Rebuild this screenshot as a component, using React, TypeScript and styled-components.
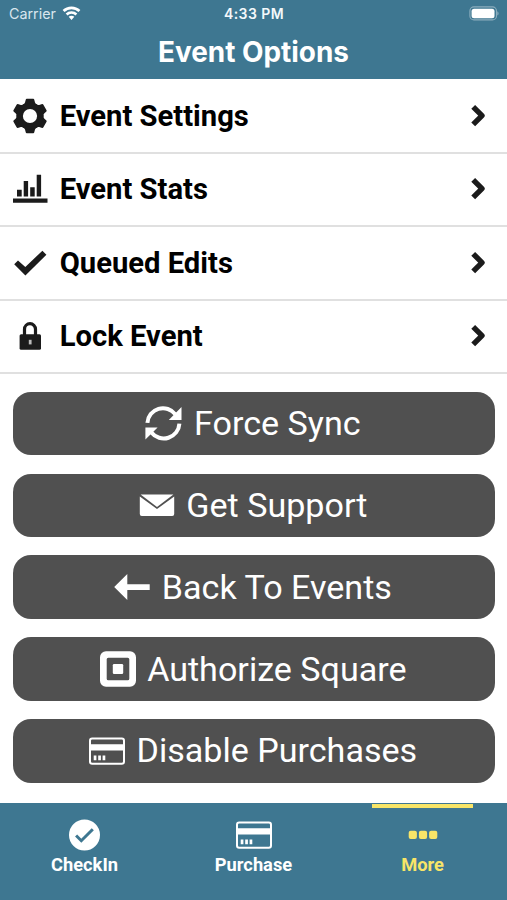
import React from "react";
import styled, { createGlobalStyle } from "styled-components";

const TEAL = "#3e7791";
const YELLOW = "#f8e568";
const INK = "#1b1b1b";

const GlobalStyle = createGlobalStyle`
  *, *::before, *::after { box-sizing: border-box; }
  body { margin: 0; background: #fff; }
`;

const Screen = styled.div`
  width: 507px;
  height: 900px;
  display: flex;
  flex-direction: column;
  overflow: hidden;
  background: #fff;
  font-family: Roboto, "Liberation Sans", sans-serif;
`;

const Header = styled.header`
  height: 79.4px;
  flex: none;
  background: ${TEAL};
  color: #fff;
  font-family: Inter, "Liberation Sans", sans-serif;
`;

const StatusBar = styled.div`
  height: 27px;
  display: grid;
  grid-template-columns: 1fr auto 1fr;
  align-items: center;
  padding: 0 8px 0 9px;
`;

const Carrier = styled.div`
  display: flex;
  align-items: center;
  gap: 6px;
  color: #d9e6ee;
  font-size: 14.3px;
  letter-spacing: 0;
`;

const Clock = styled.div`
  font-size: 14px;
  font-weight: 600;
  letter-spacing: 0.45px;
  color: #f3f8fb;
`;

const Battery = styled.div`
  display: flex;
  justify-content: flex-end;
`;

const Title = styled.h1`
  margin: 0;
  height: 51px;
  line-height: 51px;
  text-align: center;
  font-size: 27.9px;
  font-weight: 700;
  letter-spacing: 0;
`;

const Menu = styled.nav`
  flex: none;
  padding-top: 1px;
`;

const MenuRow = styled.a`
  height: 73.4px;
  display: flex;
  align-items: center;
  padding: 0 20px 0 12px;
  border-bottom: 2px solid #e0e0e0;
  color: #000;
  font-size: 29.2px;
  font-weight: 700;
`;

const MenuIcon = styled.span`
  width: 36px;
  height: 36px;
  margin-right: 11.7px;
  display: flex;
`;

const MenuLabel = styled.span`
  flex: 1;
`;

const Actions = styled.main`
  flex: 1;
  display: flex;
  flex-direction: column;
  gap: 18.35px;
  padding: 17.8px 12.5px 0 13px;
`;

const ActionButton = styled.button`
  height: 63.5px;
  flex: none;
  display: flex;
  align-items: center;
  justify-content: center;
  gap: 11.6px;
  padding: 0 1.4px 1px 0;
  border: 0;
  border-radius: 18px;
  background: #505050;
  color: #fff;
  font: 400 34.1px Roboto, "Liberation Sans", sans-serif;

  svg {
    margin-top: 1px;
  }
`;

const TabBar = styled.footer`
  height: 97.5px;
  flex: none;
  display: grid;
  grid-template-columns: repeat(3, 1fr);
  background: ${TEAL};
`;

const Tab = styled.a<{ $active?: boolean }>`
  display: flex;
  flex-direction: column;
  align-items: center;
  color: ${(p) => (p.$active ? YELLOW : "#fff")};
  font-size: 18.3px;
  font-weight: 700;
  line-height: 24px;
`;

const TabMarker = styled.span<{ $active?: boolean }>`
  width: 101px;
  height: 4px;
  margin-top: 1px;
  margin-bottom: 9.5px;
  background: ${(p) => (p.$active ? YELLOW : "transparent")};
`;

const TabIcon = styled.span`
  height: 36px;
  display: flex;
  align-items: center;
`;

const WifiIcon = () => (
  <svg width="19" height="15" viewBox="0 0 19 15" fill="#fff">
    <path d="M9.5.5C6 .5 2.900 1.900.6 4.100L2.500 6.100a10 10 0 0 1 14 0L18.400 4.100A12.700 12.700 0 0 0 9.500.5Z" />
    <path d="M9.500 5.200A8.200 8.200 0 0 0 3.700 7.500L5.500 9.400a5.700 5.700 0 0 1 8 0L15.300 7.500A8.200 8.200 0 0 0 9.500 5.200Z" />
    <path d="M9.500 9.700a4 4 0 0 0-2.800 1.100L9.500 14l2.800-3.200a4 4 0 0 0-2.800-1.100Z" />
  </svg>
);

const BatteryIcon = () => (
  <svg width="30" height="15" viewBox="0 0 30 15">
    <rect x=".9" y=".9" width="26.600" height="13" rx="4" fill="none" stroke="#8badbd" strokeWidth="1.100" />
    <rect x="2.600" y="2.700" width="22.900" height="9.500" rx="2.500" fill="#fff" />
    <path d="M28.300 5.200v4.400a2.500 2.500 0 0 0 0-4.400Z" fill="#8badbd" />
  </svg>
);

const GearIcon = () => (
  <svg width="36" height="36" viewBox="-18 -18 36 36" fill={INK}>
    {[0, 60, 120, 180, 240, 300].map((angle) => (
      <path
        key={angle}
        transform={`rotate(${angle})`}
        d="M-3.300-17.200H3.300Q4-17.200 4.200-16.500L5-13.500Q5.500-11.800 7-11.700L0 0L-7-11.700Q-5.500-11.800-5-13.500L-4.200-16.500Q-4-17.200-3.300-17.200Z"
      />
    ))}
    <circle r="10.200" fill="none" stroke={INK} strokeWidth="6.200" />
    <circle r="7.100" fill="#fff" />
  </svg>
);

const StatsIcon = () => (
  <svg width="36" height="36" viewBox="0 0 36 36" fill={INK}>
    <path d="M1 27.400h34.500v4.400H1zM5 18.700h4.700v6.700H5zM11.700 10h4.400v15.400h-4.400zM18.200 16.300h4.500v9.100h-4.500zM24.700 3.800h4.400v21.600h-4.400z" />
  </svg>
);

const CheckIcon = () => (
  <svg width="36" height="36" viewBox="0 0 36 36" fill={INK}>
    <path d="M2.200 19.300 6 15.500 13.300 22 30.400 5.700 34.400 9.700 13.400 30.600Z" />
  </svg>
);

const LockIcon = () => (
  <svg width="36" height="36" viewBox="0 0 36 36">
    <path d="M12.500 17V11.200a5.500 5.500 0 0 1 11 0V17" fill="none" stroke={INK} strokeWidth="3.200" />
    <rect x="7.600" y="16.200" width="21.400" height="15.600" rx="1.500" fill={INK} />
    <path d="M16.800 21.800h2.800v4.600h-2.800z" fill="#bbb" />
  </svg>
);

const ChevronIcon = () => (
  <svg width="18" height="26" viewBox="0 0 18 26">
    <path d="M4.200 3.800 13 12.600 4.200 21.400" fill="none" stroke={INK} strokeWidth="5.400" strokeLinejoin="round" />
  </svg>
);

const SyncIcon = () => (
  <svg width="37" height="37" viewBox="0 0 37 37" fill="#fff">
    <path d="M2.400 17.800A15.600 15.600 0 0 1 30.400 9.400M34.400 18.600A15.700 15.700 0 0 1 6.400 27.500" fill="none" stroke="#fff" strokeWidth="4" />
    <path d="M36.500 2v13.100H23.800ZM.4 34.500V22.400H12.600Z" />
  </svg>
);

const MailIcon = () => (
  <svg width="36" height="36" viewBox="0 0 36 36" fill="#fff">
    <path d="M1.600 7.600H34.400L18 19.900Z" />
    <path d="M.8 9.500 18 22 35.200 9.500V27a2 2 0 0 1-2 2H2.800a2 2 0 0 1-2-2Z" />
  </svg>
);

const ArrowIcon = () => (
  <svg width="36" height="36" viewBox="0 0 36 36" fill="#fff">
    <path d="M.2 18.100 13.300 5V15.200H35.700V21.100H13.300V31Z" />
  </svg>
);

const SquareIcon = () => (
  <svg width="36" height="36" viewBox="0 0 36 36" fill="#fff">
    <path
      fillRule="evenodd"
      d="M6 .2H30A6 6 0 0 1 36 6.200V29.800A6 6 0 0 1 30 35.800H6A6 6 0 0 1 0 29.800V6.200A6 6 0 0 1 6 .2ZM8.300 6.700Q6.700 6.700 6.700 8.300V27.700Q6.700 29.300 8.300 29.300H27.700Q29.300 29.300 29.300 27.700V8.300Q29.300 6.700 27.700 6.700Z"
    />
    <rect x="12.800" y="12.900" width="10.400" height="10.200" rx="1.300" />
  </svg>
);

const CardIcon = () => (
  <svg width="36" height="36" viewBox="0 0 36 36" fill="#fff">
    <rect x="1" y="5.600" width="34" height="25.200" rx="2.200" fill="none" stroke="#fff" strokeWidth="2" />
    <path d="M1 11.300h34v6.300H1zM4.700 22.600h2.700v4.600H4.700zM9.200 22.600h2.700v4.600H9.200zM13.600 22.600h2.700v4.600h-2.700z" />
  </svg>
);

const CheckCircleIcon = () => (
  <svg width="32" height="32" viewBox="0 0 32 32">
    <circle cx="15.500" cy="16" r="15.500" fill="#fff" />
    <path d="m7.100 16.500 5.200 5.200L23.800 10.300" fill="none" stroke={TEAL} strokeWidth="3" />
  </svg>
);

const DotsIcon = () => (
  <svg width="30" height="10" viewBox="0 0 30 10" fill={YELLOW}>
    <rect x=".7" y=".8" width="8.200" height="8.200" rx="2" />
    <rect x="10.900" y=".8" width="8.200" height="8.200" rx="2" />
    <rect x="21.100" y=".8" width="8.200" height="8.200" rx="2" />
  </svg>
);

const menuItems = [
  { label: "Event Settings", Icon: GearIcon },
  { label: "Event Stats", Icon: StatsIcon },
  { label: "Queued Edits", Icon: CheckIcon },
  { label: "Lock Event", Icon: LockIcon },
];

const actions = [
  { label: "Force Sync", Icon: SyncIcon },
  { label: "Get Support", Icon: MailIcon },
  { label: "Back To Events", Icon: ArrowIcon },
  { label: "Authorize Square", Icon: SquareIcon },
  { label: "Disable Purchases", Icon: CardIcon },
];

const tabs = [
  { label: "CheckIn", Icon: CheckCircleIcon, active: false },
  { label: "Purchase", Icon: CardIcon, active: false },
  { label: "More", Icon: DotsIcon, active: true },
];

export default function App() {
  return (
    <>
      <GlobalStyle />
      <Screen>
        <Header>
          <StatusBar>
            <Carrier>
              Carrier
              <WifiIcon />
            </Carrier>
            <Clock>4:33 PM</Clock>
            <Battery>
              <BatteryIcon />
            </Battery>
          </StatusBar>
          <Title>Event Options</Title>
        </Header>
        <Menu>
          {menuItems.map(({ label, Icon }) => (
            <MenuRow key={label}>
              <MenuIcon>
                <Icon />
              </MenuIcon>
              <MenuLabel>{label}</MenuLabel>
              <ChevronIcon />
            </MenuRow>
          ))}
        </Menu>
        <Actions>
          {actions.map(({ label, Icon }) => (
            <ActionButton key={label}>
              <Icon />
              <span>{label}</span>
            </ActionButton>
          ))}
        </Actions>
        <TabBar>
          {tabs.map(({ label, Icon, active }) => (
            <Tab key={label} $active={active}>
              <TabMarker $active={active} />
              <TabIcon>
                <Icon />
              </TabIcon>
              <span>{label}</span>
            </Tab>
          ))}
        </TabBar>
      </Screen>
    </>
  );
}
